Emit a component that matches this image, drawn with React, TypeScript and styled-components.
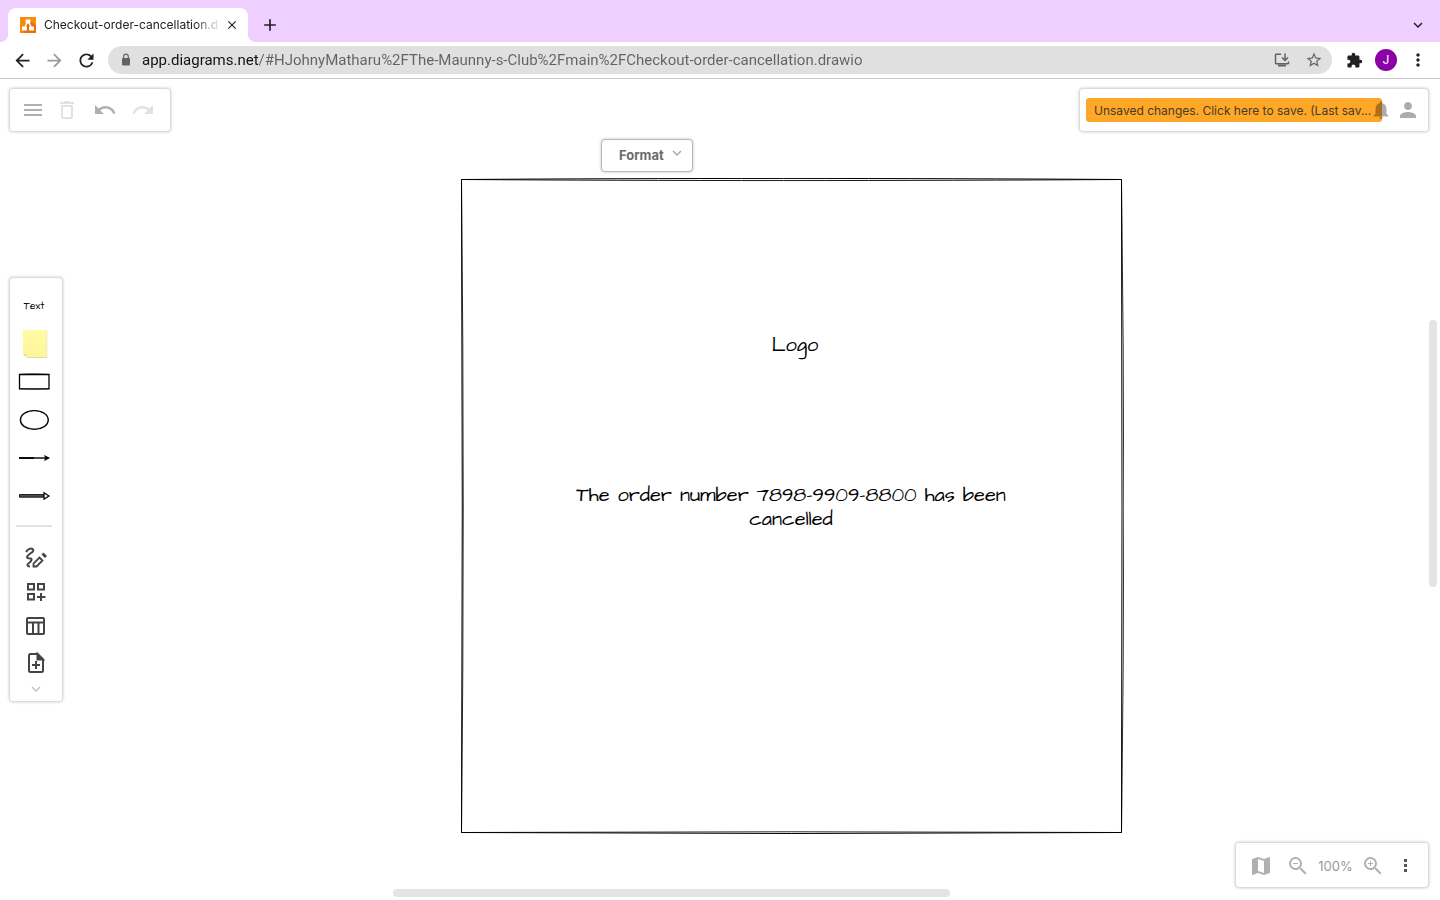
import React from "react";
import styled, { createGlobalStyle } from "styled-components";
import {
  MdAdd,
  MdArrowBack,
  MdArrowForward,
  MdClose,
  MdDeleteOutline,
  MdExtension,
  MdKeyboardArrowDown,
  MdMap,
  MdMenu,
  MdMoreVert,
  MdNotifications,
  MdPerson,
  MdRedo,
  MdRefresh,
  MdStarBorder,
  MdUndo,
  MdZoomIn,
  MdZoomOut,
} from "react-icons/md";

const UI_FONT = 'Inter, "Liberation Sans", sans-serif';
const SKETCH_FONT = '"Architects Daughter", "DejaVu Sans", sans-serif';

const GlobalStyle = createGlobalStyle`
  *, *::before, *::after { box-sizing: border-box; }
  body { margin: 0; background: #fff; font-family: ${UI_FONT}; }
  svg { display: block; }
`;

const Page = styled.div`
  display: flex;
  flex-direction: column;
  min-height: 100vh;
`;

const IconButton = styled.button<{ $color?: string }>`
  display: flex;
  align-items: center;
  justify-content: center;
  flex: none;
  width: 24px;
  height: 24px;
  padding: 0;
  border: 0;
  background: none;
  color: ${(p) => p.$color ?? "#202124"};
  cursor: pointer;
`;

/* Browser chrome */

const TabStrip = styled.header`
  display: flex;
  align-items: flex-end;
  height: 42px;
  padding: 0 10px 0 8px;
  background: #eecfff;
`;

const Tab = styled.div`
  position: relative;
  display: flex;
  align-items: center;
  width: 240px;
  height: 34px;
  padding: 0 4px 0 12px;
  border-radius: 8px 8px 0 0;
  background: #fff;

  &::before,
  &::after {
    content: "";
    position: absolute;
    bottom: 0;
    width: 8px;
    height: 8px;
  }
  &::before {
    left: -8px;
    background: radial-gradient(circle at 0 0, transparent 8px, #fff 8px);
  }
  &::after {
    right: -8px;
    background: radial-gradient(circle at 100% 0, transparent 8px, #fff 8px);
  }
`;

const TabTitle = styled.span`
  flex: 1;
  min-width: 0;
  margin-left: 8px;
  margin-right: 2px;
  white-space: nowrap;
  font-size: 12px;
  line-height: 16px;
  color: #202124;
  mask-image: linear-gradient(90deg, #000 150px, transparent 178px);
`;

const StripActions = styled.div`
  display: flex;
  flex: 1;
  align-items: center;
  justify-content: space-between;
  height: 34px;
  padding-left: 10px;
`;

const BrowserBar = styled.nav`
  display: flex;
  align-items: center;
  gap: 8px;
  height: 37px;
  padding: 0 10px;
  border-bottom: 1px solid #c8c8c8;
`;

const AddressBar = styled.label`
  display: flex;
  flex: 1;
  align-items: center;
  height: 28px;
  margin: 0 2px;
  padding: 0 6px 0 10px;
  border-radius: 14px;
  background: #e0e0e0;
`;

const AddressInput = styled.input`
  flex: 1;
  min-width: 0;
  margin: 0 8px;
  padding: 0;
  border: 0;
  outline: 0;
  font: 15px/20px Roboto, ${UI_FONT};
  background: linear-gradient(90deg, #111214 117px, #5f6368 117px);
  background-clip: text;
  -webkit-text-fill-color: transparent;
`;

const AddressActions = styled.span`
  display: flex;
  gap: 8px;
`;

const BarActions = styled.div`
  display: flex;
  gap: 8px;
  align-items: center;
`;

const Avatar = styled.button`
  width: 22px;
  height: 22px;
  margin: 0 1px;
  padding: 0;
  border: 0;
  border-radius: 50%;
  background: #8c00a8;
  color: #fff;
  font: 12px/22px ${UI_FONT};
`;

/* Editor */

const Workspace = styled.main`
  display: grid;
  flex: 1;
  grid-template: auto 1fr auto / auto 1fr auto;
  padding: 10px 12px 13px 10px;
  position: relative;
`;

const Canvas = styled.section`
  position: absolute;
  inset: 0;
  overflow: hidden;
`;

const Shape = styled.div`
  position: absolute;
  left: 461px;
  top: 99px;
  width: 663px;
`;

const CanvasText = styled.p<{ $left: number; $top: number; $width: number }>`
  position: absolute;
  left: ${(p) => p.$left}px;
  top: ${(p) => p.$top}px;
  width: ${(p) => p.$width}px;
  margin: 0;
  text-align: center;
  font-family: ${SKETCH_FONT};
  font-size: 20px;
  line-height: 24px;
  color: #000;
`;

const FormatButton = styled.button`
  position: absolute;
  left: 601px;
  top: 60px;
  display: flex;
  align-items: center;
  gap: 4px;
  height: 33px;
  padding: 0 6px 2px 17px;
  border: 1px solid #b8b8b8;
  border-radius: 4px;
  background: #fff;
  box-shadow: 0 0 3px rgba(0, 0, 0, 0.25);
  color: #6b6b6b;
  font: 700 13px/16px ${UI_FONT};

  svg {
    margin-bottom: 4px;
    color: #aaa;
  }
`;

const ScrollThumb = styled.div<{ $vertical?: boolean }>`
  position: absolute;
  border-radius: 4px;
  background: #e4e4e4;
  ${(p) =>
    p.$vertical
      ? "right: 3px; top: 241px; width: 8px; height: 267px;"
      : "bottom: 3px; left: 393px; width: 557px; height: 8px;"}
`;

const Panel = styled.div`
  position: relative;
  display: flex;
  align-items: center;
  border-radius: 3px;
  background: #fff;
  box-shadow: 0 0 3px 1px rgba(0, 0, 0, 0.22);
`;

const MainMenu = styled(Panel)`
  grid-area: 1 / 1;
  gap: 14px;
  height: 42px;
  padding: 0 15px 0 11px;
`;

const ToolGroup = styled.div<{ $gap: number }>`
  display: flex;
  gap: ${(p) => p.$gap}px;
`;

const StatusPanel = styled(Panel)`
  grid-area: 1 / 3;
  justify-self: end;
  height: 42px;
  padding: 0 8px 0 6px;

  svg {
    opacity: 0.32;
  }
`;

const SaveNotice = styled.button`
  width: 296px;
  height: 24px;
  margin-right: -13px;
  padding: 2px 8px 0;
  border: 0;
  border-radius: 3px;
  background: #ffa726;
  color: #453a2b;
  font: 12px/22px ${UI_FONT};
  text-align: left;
  white-space: nowrap;
`;

const NoticeIcons = styled.div`
  position: relative;
  display: flex;
  gap: 3px;
`;

const ShapePanel = styled(Panel)`
  grid-area: 1 / 1 / -1 / 2;
  align-self: center;
  flex-direction: column;
  width: 52px;
  height: 423px;
  margin-top: 3px;
  padding-top: 9px;
`;

const ShapeButton = styled(IconButton)`
  width: 44px;
  height: 38px;
`;

const TextShape = styled(ShapeButton)`
  padding-right: 4px;
  font: 10px/12px ${SKETCH_FONT};
  color: #000;
`;

const Divider = styled.hr`
  width: 36px;
  height: 2px;
  margin: 10px 4px 14px 0;
  border: 0;
  background: #e2e2e2;
`;

const ToolButton = styled(IconButton)`
  width: 36px;
  height: 34px;
  color: #444;
`;

const ZoomPanel = styled(Panel)`
  grid-area: 3 / 3;
  justify-self: end;
  height: 44px;
  padding: 2px 11px 0 13px;
`;

const ZoomControls = styled.div`
  display: flex;
  align-items: center;
  gap: 6px;
  margin: 0 8px 0 13px;
`;

const ZoomLevel = styled.button`
  width: 39px;
  padding: 0;
  border: 0;
  background: none;
  color: #999;
  font: 13px/20px ${UI_FONT};
`;

function DiagramLogo() {
  return (
    <svg width="16" height="16" viewBox="0 0 16 16" aria-hidden="true">
      <rect width="16" height="16" fill="#f98a0c" />
      <path d="M10 3l6 6v7H5l-2.500-2.500z" fill="#e8710a" />
      <path d="M8 4L4.500 11M8 4l3.500 7" stroke="#fff" strokeWidth="1.500" />
      <rect x="5.500" y="2.500" width="5" height="4" rx=".5" fill="#fff" />
      <rect x="2" y="9.500" width="5" height="4" rx=".5" fill="#fff" />
      <rect x="9" y="9.500" width="5" height="4" rx=".5" fill="#fff" />
    </svg>
  );
}

function LockIcon() {
  return (
    <svg width="16" height="16" viewBox="0 0 16 16" fill="none" aria-hidden="true">
      <rect x="4" y="6" width="8" height="7.500" rx="1" fill="#5f6368" />
      <path d="M5.700 6.500V4.500a2.300 2.300 0 0 1 4.600 0v2" stroke="#5f6368" strokeWidth="1.200" />
    </svg>
  );
}

function InstallIcon() {
  return (
    <svg width="16" height="16" viewBox="0 0 16 16" fill="none" stroke="#5f6368" strokeWidth="1.500">
      <path d="M7 2.200H2.200Q1.500 2.200 1.500 3v8q0 .8.800.8h11.400q.8 0 .8-.8V9.500" />
      <path d="M11 1.500v6.500M8 5.500l3 3 3-3" />
      <path d="M4 13.500h8" strokeWidth="2" />
    </svg>
  );
}

function SketchFrame() {
  return (
    <svg width="663" height="657" viewBox="0 0 663 657" fill="none" stroke="#000" aria-hidden="true">
      <path d="M.5 1.500C200 .1 440 .1 660.500 1.500" />
      <path d="M.5 1.500C200 2.900 440 2.900 660.500 1.500" strokeWidth=".9" />
      <path d="M660.500 1.500Q665 330 660.500 654.500" strokeWidth=".8" />
      <path d="M660.500 1.500Q661.500 330 660.500 654.500" />
      <path d="M660.500 654.500Q330 656.500 .5 654.500" />
      <path d="M660.500 654.500Q330 653 .5 654.500" strokeWidth=".8" />
      <path d="M.5 654.500Q2 330 .5 1.500" />
      <path d="M.5 654.500Q4 330 .5 1.500" strokeWidth=".8" />
    </svg>
  );
}

function NoteShape() {
  return (
    <svg width="44" height="38" viewBox="0 0 44 38">
      <defs>
        <linearGradient id="note" x1="0" y1="0" x2="0" y2="1">
          <stop offset="0" stopColor="#fffba5" />
          <stop offset="1" stopColor="#fff59a" />
        </linearGradient>
      </defs>
      <path d="M9.200 6h24v27H13l-3.800-4z" fill="#000" opacity=".18" />
      <path d="M9 5h23.800v27.300H12l-3-3z" fill="url(#note)" />
      <path d="M9 29h3v3z" fill="#e6dc82" />
    </svg>
  );
}

function RectShape() {
  return (
    <svg width="44" height="38" viewBox="0 0 44 38" fill="none" stroke="#000" strokeWidth="1.300">
      <path d="M5.500 11.500h29.500v14.300H5.500z" />
      <path d="M5.500 11.500q12-1.500 29.500 0" strokeWidth=".6" />
      <path d="M35 25.800q-15 1-29.500 0" strokeWidth=".6" />
    </svg>
  );
}

function EllipseShape() {
  return (
    <svg width="44" height="38" viewBox="0 0 44 38" fill="none" stroke="#000" strokeWidth="1.200">
      <ellipse cx="20.300" cy="19" rx="14" ry="9.500" />
      <ellipse cx="20.500" cy="18.800" rx="13.700" ry="9" strokeWidth=".5" />
    </svg>
  );
}

function LineShape() {
  return (
    <svg width="44" height="38" viewBox="0 0 44 38" stroke="#000">
      <path d="M5 19h15" strokeWidth="1.900" />
      <path d="M20 19h12" strokeWidth="1.400" />
      <path d="M30.500 16.500l5 2.500-5 2.500 1-2.500z" fill="#000" strokeWidth=".6" />
    </svg>
  );
}

function ArrowShape() {
  return (
    <svg width="44" height="38" viewBox="0 0 44 38" stroke="#000">
      <path d="M5.500 17.600h24v2.600h-24z" fill="#555" strokeWidth=".9" />
      <path d="M30 15.700l5 3.200-5 3.200z" fill="#fff" strokeWidth="1.200" />
    </svg>
  );
}

function FreehandIcon() {
  return (
    <svg width="24" height="24" viewBox="0 0 24 24" fill="none" stroke="currentColor" strokeWidth="2">
      <path d="M2 6C4 3 7 1.500 9 3.500s-4 4-5.500 6.500 1 2.500 3 2.500 1 3-1.500 4.500-2 3.500 1 3.500" />
      <path d="M9.500 17.500v3h3l6-6-3-3z" strokeWidth="1.800" />
      <path d="M17.500 8.500l2-2 3.500 3.500-2 2z" fill="currentColor" stroke="none" />
    </svg>
  );
}

function ShapesIcon() {
  return (
    <svg width="24" height="24" viewBox="0 0 24 24" fill="none" stroke="currentColor" strokeWidth="2">
      <path d="M4 4h6v5.500H4zM14 4h6v5.500h-6zM4 14h6v5.500H4zM17 13v8M13 17h8.500" />
    </svg>
  );
}

function TableIcon() {
  return (
    <svg width="24" height="24" viewBox="0 0 24 24" fill="none" stroke="currentColor" strokeWidth="2">
      <rect x="3" y="4" width="17" height="16" rx="1" />
      <path d="M3 8.500h17M9 8.500V20M14.500 8.500V20" />
    </svg>
  );
}

function NewPageIcon() {
  return (
    <svg width="24" height="28" viewBox="0 0 24 28" fill="none" stroke="currentColor" strokeWidth="2">
      <path d="M13.500 8H6.500Q5 8 5 9.500v15Q5 26 6.500 26h11q1.500 0 1.500-1.500v-11z" />
      <path d="M13.500 8v5.500H19z" fill="currentColor" />
      <path d="M12 15v8M8 19h8" />
    </svg>
  );
}

function SquareDots() {
  return (
    <svg width="24" height="24" viewBox="0 0 24 24" fill="currentColor">
      <path d="M11 5h3v3h-3zM11 10h3v3h-3zM11 15h3v3h-3z" />
    </svg>
  );
}

const shapes = [
  { label: "Note", Icon: NoteShape },
  { label: "Rectangle", Icon: RectShape },
  { label: "Ellipse", Icon: EllipseShape },
  { label: "Line", Icon: LineShape },
  { label: "Arrow", Icon: ArrowShape },
];

const tools = [
  { label: "Freehand", Icon: FreehandIcon },
  { label: "Shapes", Icon: ShapesIcon },
  { label: "Table", Icon: TableIcon },
  { label: "Insert", Icon: NewPageIcon },
];

export default function App() {
  return (
    <Page>
      <GlobalStyle />
      <TabStrip>
        <Tab>
          <DiagramLogo />
          <TabTitle>Checkout-order-cancellation.d</TabTitle>
          <IconButton aria-label="Close tab">
            <MdClose size={14} />
          </IconButton>
        </Tab>
        <StripActions>
          <IconButton aria-label="New tab">
            <MdAdd size={20} />
          </IconButton>
          <IconButton aria-label="Search tabs">
            <MdKeyboardArrowDown size={18} />
          </IconButton>
        </StripActions>
      </TabStrip>

      <BrowserBar>
        <IconButton aria-label="Back">
          <MdArrowBack size={21} />
        </IconButton>
        <IconButton aria-label="Forward" $color="#9a9a9a">
          <MdArrowForward size={21} />
        </IconButton>
        <IconButton aria-label="Reload">
          <MdRefresh size={21} />
        </IconButton>
        <AddressBar>
          <LockIcon />
          <AddressInput
            aria-label="Address"
            defaultValue="app.diagrams.net/#HJohnyMatharu%2FThe-Maunny-s-Club%2Fmain%2FCheckout-order-cancellation.drawio"
          />
          <AddressActions>
            <IconButton aria-label="Install app">
              <InstallIcon />
            </IconButton>
            <IconButton aria-label="Bookmark" $color="#5f6368">
              <MdStarBorder size={18} />
            </IconButton>
          </AddressActions>
        </AddressBar>
        <BarActions>
          <IconButton aria-label="Extensions">
            <MdExtension size={17} />
          </IconButton>
          <Avatar aria-label="Profile">J</Avatar>
          <IconButton aria-label="Browser menu">
            <MdMoreVert size={20} />
          </IconButton>
        </BarActions>
      </BrowserBar>

      <Workspace>
        <Canvas>
          <Shape>
            <SketchFrame />
          </Shape>
          <CanvasText $left={735} $top={254} $width={120}>
            Logo
          </CanvasText>
          <CanvasText $left={561} $top={404} $width={460}>
            The order number 7898-9909-8800 has been cancelled
          </CanvasText>
          <FormatButton>
            Format
            <MdKeyboardArrowDown size={18} />
          </FormatButton>
          <ScrollThumb />
          <ScrollThumb $vertical />
        </Canvas>

        <MainMenu>
          <ToolGroup $gap={10}>
            <IconButton aria-label="Menu" $color="#b0b0b0">
              <MdMenu size={24} />
            </IconButton>
            <IconButton aria-label="Delete" $color="#e2e2e2">
              <MdDeleteOutline size={24} />
            </IconButton>
          </ToolGroup>
          <ToolGroup $gap={14}>
            <IconButton aria-label="Undo" $color="#b0b0b0">
              <MdUndo size={24} />
            </IconButton>
            <IconButton aria-label="Redo" $color="#e2e2e2">
              <MdRedo size={24} />
            </IconButton>
          </ToolGroup>
        </MainMenu>

        <StatusPanel>
          <SaveNotice>Unsaved changes. Click here to save. (Last sav...</SaveNotice>
          <NoticeIcons>
            <IconButton aria-label="Notifications" $color="#000">
              <MdNotifications size={22} />
            </IconButton>
            <IconButton aria-label="Account" $color="#000">
              <MdPerson size={24} />
            </IconButton>
          </NoticeIcons>
        </StatusPanel>

        <ShapePanel>
          <TextShape>Text</TextShape>
          {shapes.map(({ label, Icon }) => (
            <ShapeButton key={label} aria-label={label}>
              <Icon />
            </ShapeButton>
          ))}
          <Divider />
          {tools.map(({ label, Icon }) => (
            <ToolButton key={label} aria-label={label}>
              <Icon />
            </ToolButton>
          ))}
          <IconButton aria-label="Collapse" $color="#c4c4c4">
            <MdKeyboardArrowDown size={18} />
          </IconButton>
        </ShapePanel>

        <ZoomPanel>
          <IconButton aria-label="Outline" $color="#b0b0b0">
            <MdMap size={24} />
          </IconButton>
          <ZoomControls>
            <IconButton aria-label="Zoom out" $color="#b0b0b0">
              <MdZoomOut size={24} />
            </IconButton>
            <ZoomLevel>100%</ZoomLevel>
            <IconButton aria-label="Zoom in" $color="#b0b0b0">
              <MdZoomIn size={24} />
            </IconButton>
          </ZoomControls>
          <IconButton aria-label="More" $color="#555">
            <SquareDots />
          </IconButton>
        </ZoomPanel>
      </Workspace>
    </Page>
  );
}
